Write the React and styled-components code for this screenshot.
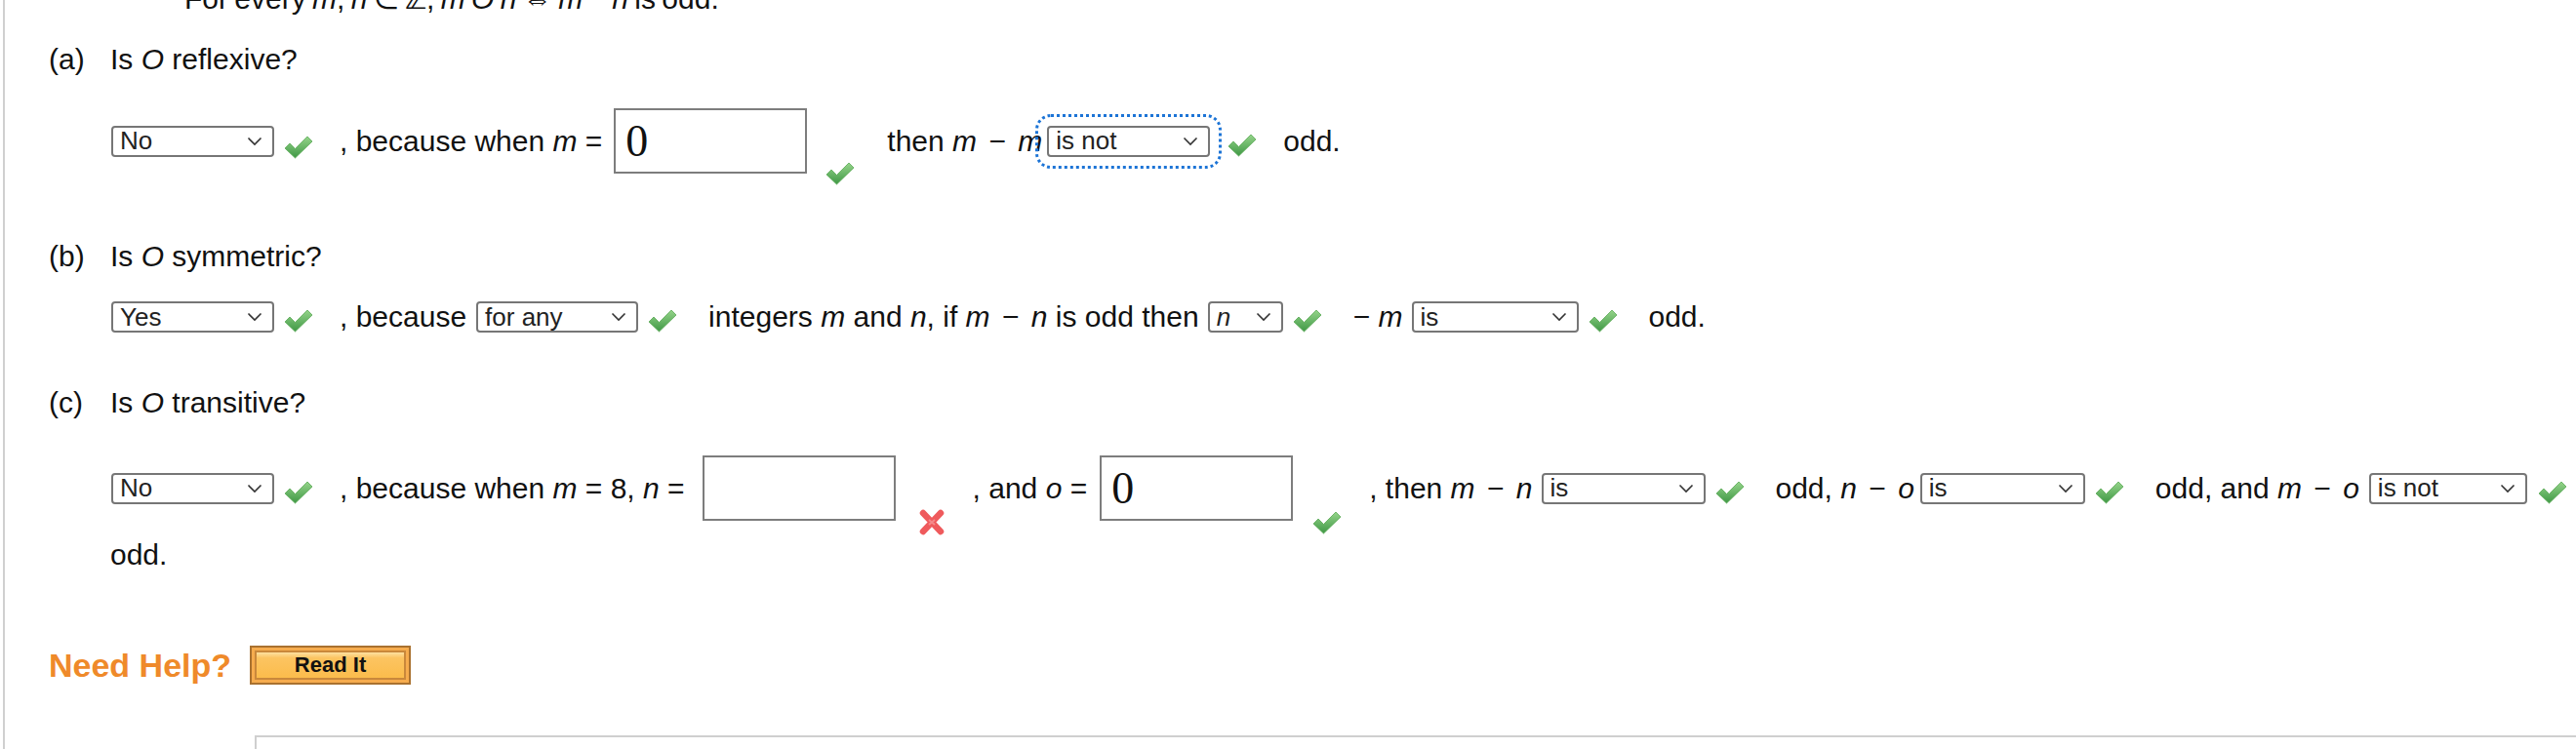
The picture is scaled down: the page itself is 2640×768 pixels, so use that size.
import React from "react";
import styled, { createGlobalStyle, css } from "styled-components";

const Global = createGlobalStyle`
  html, body { margin: 0; padding: 0; background: #fff; overflow: hidden; }
  body { font-family: "Liberation Sans", Arial, sans-serif; color: #111; }
`;

const Page = styled.div`
  margin-left: 3px;
  border-left: 2px solid #d0d0d0;
  padding-left: 45px;
  min-height: 800px;
  font-size: 30px;
`;

const TopLine = styled.p`
  margin: -18px 0 0 139px;
  line-height: 34px;
  white-space: nowrap;
  word-spacing: -2px;
`;

const Var = styled.i`
  font-style: italic;
`;

const Op = styled.span`
  margin: 0 4px;
`;

const Heading = styled.div`
  display: grid;
  grid-template-columns: 63px auto;
  line-height: 34px;
  margin-top: ${(p) => p.$top}px;
`;

const AnswerRow = styled.div`
  display: flex;
  align-items: center;
  min-height: 34px;
  margin: ${(p) => p.$top}px 0 0 63px;
  white-space: nowrap;
`;

const Phrase = styled.span`
  margin-left: ${(p) => p.$gap ?? 28}px;
  line-height: 34px;
  flex-shrink: 0;
`;

const SelectBox = styled.span`
  display: inline-flex;
  align-items: center;
  justify-content: space-between;
  box-sizing: border-box;
  flex-shrink: 0;
  width: ${(p) => p.$w}px;
  height: 32px;
  margin-left: ${(p) => p.$gap ?? 10}px;
  padding: 0 10px 0 7px;
  border: 2px solid #767676;
  border-radius: 4px;
  background: #fff;
  font-size: 26px;
  color: #222;
  ${(p) =>
    p.$focused &&
    css`
      outline: 3px dotted #1c74d6;
      outline-offset: 9px;
    `}
`;

const SelectValue = styled.span`
  font-style: ${(p) => (p.$italic ? "italic" : "normal")};
`;

const Chevron = styled.svg`
  flex-shrink: 0;
`;

const TextField = styled.input`
  box-sizing: border-box;
  flex-shrink: 0;
  width: 198px;
  height: 67px;
  margin: 0 0 0 ${(p) => p.$gap}px;
  padding: 0 10px;
  border: 2px solid #7d7d7d;
  border-radius: 0;
  background: #fff;
  font-family: "Liberation Serif", "Times New Roman", serif;
  font-size: 46px;
  color: #111;
  outline: none;
`;

const Mark = styled.svg`
  flex-shrink: 0;
  margin-left: ${(p) => p.$gap ?? 10}px;
  transform: translateY(${(p) => p.$drop ?? 4}px);
`;

const ContinueLine = styled.div`
  margin: 18px 0 0 63px;
  line-height: 34px;
`;

const HelpRow = styled.div`
  display: flex;
  align-items: center;
  height: 40px;
  margin-top: 76px;
`;

const HelpLabel = styled.span`
  font-size: 34px;
  font-weight: bold;
  color: #ef8a2a;
  line-height: 40px;
`;

const ReadItButton = styled.button`
  box-sizing: border-box;
  width: 165px;
  height: 40px;
  margin-left: 19px;
  padding: 3px;
  border: 2px solid #a9712f;
  background: #f6ac4e;
  cursor: pointer;
`;

const ReadItFace = styled.span`
  display: flex;
  align-items: center;
  justify-content: center;
  box-sizing: border-box;
  height: 100%;
  border: 2px solid #c9883b;
  background: linear-gradient(#fde0a0 0%, #fcc461 22%, #fbbc4c 100%);
  font-family: "Liberation Sans", Arial, sans-serif;
  font-weight: bold;
  font-size: 22px;
  color: #111;
`;

const ResponseBox = styled.div`
  height: 40px;
  margin: 52px 0 0 211px;
  border-top: 2px solid #cfcfcf;
  border-left: 2px solid #cfcfcf;
`;

function Select({ value, w, gap, focused, italic }) {
  return (
    <SelectBox $w={w} $gap={gap} $focused={focused}>
      <SelectValue $italic={italic}>{value}</SelectValue>
      <Chevron width="16" height="10" viewBox="0 0 16 10">
        <polyline points="1.5,1.5 8,8 14.5,1.5" fill="none" stroke="#333" strokeWidth="1.6" />
      </Chevron>
    </SelectBox>
  );
}

function Check({ gap, drop }) {
  return (
    <Mark $gap={gap} $drop={drop} width="30" height="26" viewBox="0 0 30 26">
      <defs>
        <linearGradient id="chk" x1="0" y1="0" x2="0" y2="1">
          <stop offset="0" stopColor="#95d48a" />
          <stop offset="1" stopColor="#3f9845" />
        </linearGradient>
      </defs>
      <path d="M1 14 L6 9 L11.5 14.5 L24 2 L29 7 L11.5 24 Z" fill="url(#chk)" stroke="#5aa956" strokeWidth="0.8" />
    </Mark>
  );
}

function Cross({ gap, drop }) {
  return (
    <Mark $gap={gap} $drop={drop} width="26" height="27" viewBox="0 0 26 27">
      <path d="M4 4 L22 23 M22 4 L4 23" stroke="#ef5a5c" strokeWidth="6.5" strokeLinecap="round" />
      <path d="M10 11 L16 16 M16 11 L10 16" stroke="#f58a8a" strokeWidth="2" />
    </Mark>
  );
}

const Minus = () => <Op>−</Op>;

export default function App() {
  return (
    <>
      <Global />
      <Page>
        <TopLine>
          For every <Var>m</Var>, <Var>n</Var> ∈ ℤ, <Var>m</Var> <Var>O</Var> <Var>n</Var> ⇔ <Var>m</Var> − <Var>n</Var> is odd.
        </TopLine>

        <Heading $top={28}>
          <span>(a)</span>
          <span>
            Is <Var>O</Var> reflexive?
          </span>
        </Heading>
        <AnswerRow $top={33}>
          <Select value="No" w={167} gap={1} />
          <Check gap={10} drop={6} />
          <Phrase $gap={27}>
            , because when <Var>m</Var> =
          </Phrase>
          <TextField $gap={12} readOnly defaultValue="0" />
          <Check gap={19} drop={33} />
          <Phrase $gap={33}>
            then <Var>m</Var> <Minus /> <Var>m</Var>
          </Phrase>
          <Select value="is not" w={167} gap={5} focused />
          <Check gap={18} drop={4} />
          <Phrase $gap={27}>odd.</Phrase>
        </AnswerRow>

        <Heading $top={68}>
          <span>(b)</span>
          <span>
            Is <Var>O</Var> symmetric?
          </span>
        </Heading>
        <AnswerRow $top={28}>
          <Select value="Yes" w={167} gap={1} />
          <Check gap={10} />
          <Phrase $gap={27}>, because</Phrase>
          <Select value="for any" w={166} gap={10} />
          <Check gap={10} />
          <Phrase $gap={32}>
            integers <Var>m</Var> and <Var>n</Var>, if <Var>m</Var> <Minus /> <Var>n</Var> is odd then
          </Phrase>
          <Select value="n" w={77} gap={9} italic />
          <Check gap={10} />
          <Phrase $gap={32}>
            − <Var>m</Var>
          </Phrase>
          <Select value="is" w={171} gap={9} />
          <Check gap={10} />
          <Phrase $gap={32}>odd.</Phrase>
        </AnswerRow>

        <Heading $top={54}>
          <span>(c)</span>
          <span>
            Is <Var>O</Var> transitive?
          </span>
        </Heading>
        <AnswerRow $top={37}>
          <Select value="No" w={167} gap={1} />
          <Check gap={10} />
          <Phrase $gap={27}>
            , because when <Var>m</Var> = 8, <Var>n</Var> =
          </Phrase>
          <TextField $gap={18} readOnly defaultValue="" />
          <Cross gap={24} drop={35} />
          <Phrase $gap={29}>
            , and <Var>o</Var> =
          </Phrase>
          <TextField $gap={13} readOnly defaultValue="0" />
          <Check gap={20} drop={35} />
          <Phrase $gap={28}>
            , then <Var>m</Var> <Minus /> <Var>n</Var>
          </Phrase>
          <Select value="is" w={168} gap={9} />
          <Check gap={10} />
          <Phrase $gap={32}>
            odd, <Var>n</Var> <Minus /> <Var>o</Var>
          </Phrase>
          <Select value="is" w={169} gap={6} />
          <Check gap={10} />
          <Phrase $gap={32}>
            odd, and <Var>m</Var> <Minus /> <Var>o</Var>
          </Phrase>
          <Select value="is not" w={162} gap={10} />
          <Check gap={11} />
        </AnswerRow>
        <ContinueLine>odd.</ContinueLine>

        <HelpRow>
          <HelpLabel>Need Help?</HelpLabel>
          <ReadItButton type="button">
            <ReadItFace>Read It</ReadItFace>
          </ReadItButton>
        </HelpRow>

        <ResponseBox />
      </Page>
    </>
  );
}
